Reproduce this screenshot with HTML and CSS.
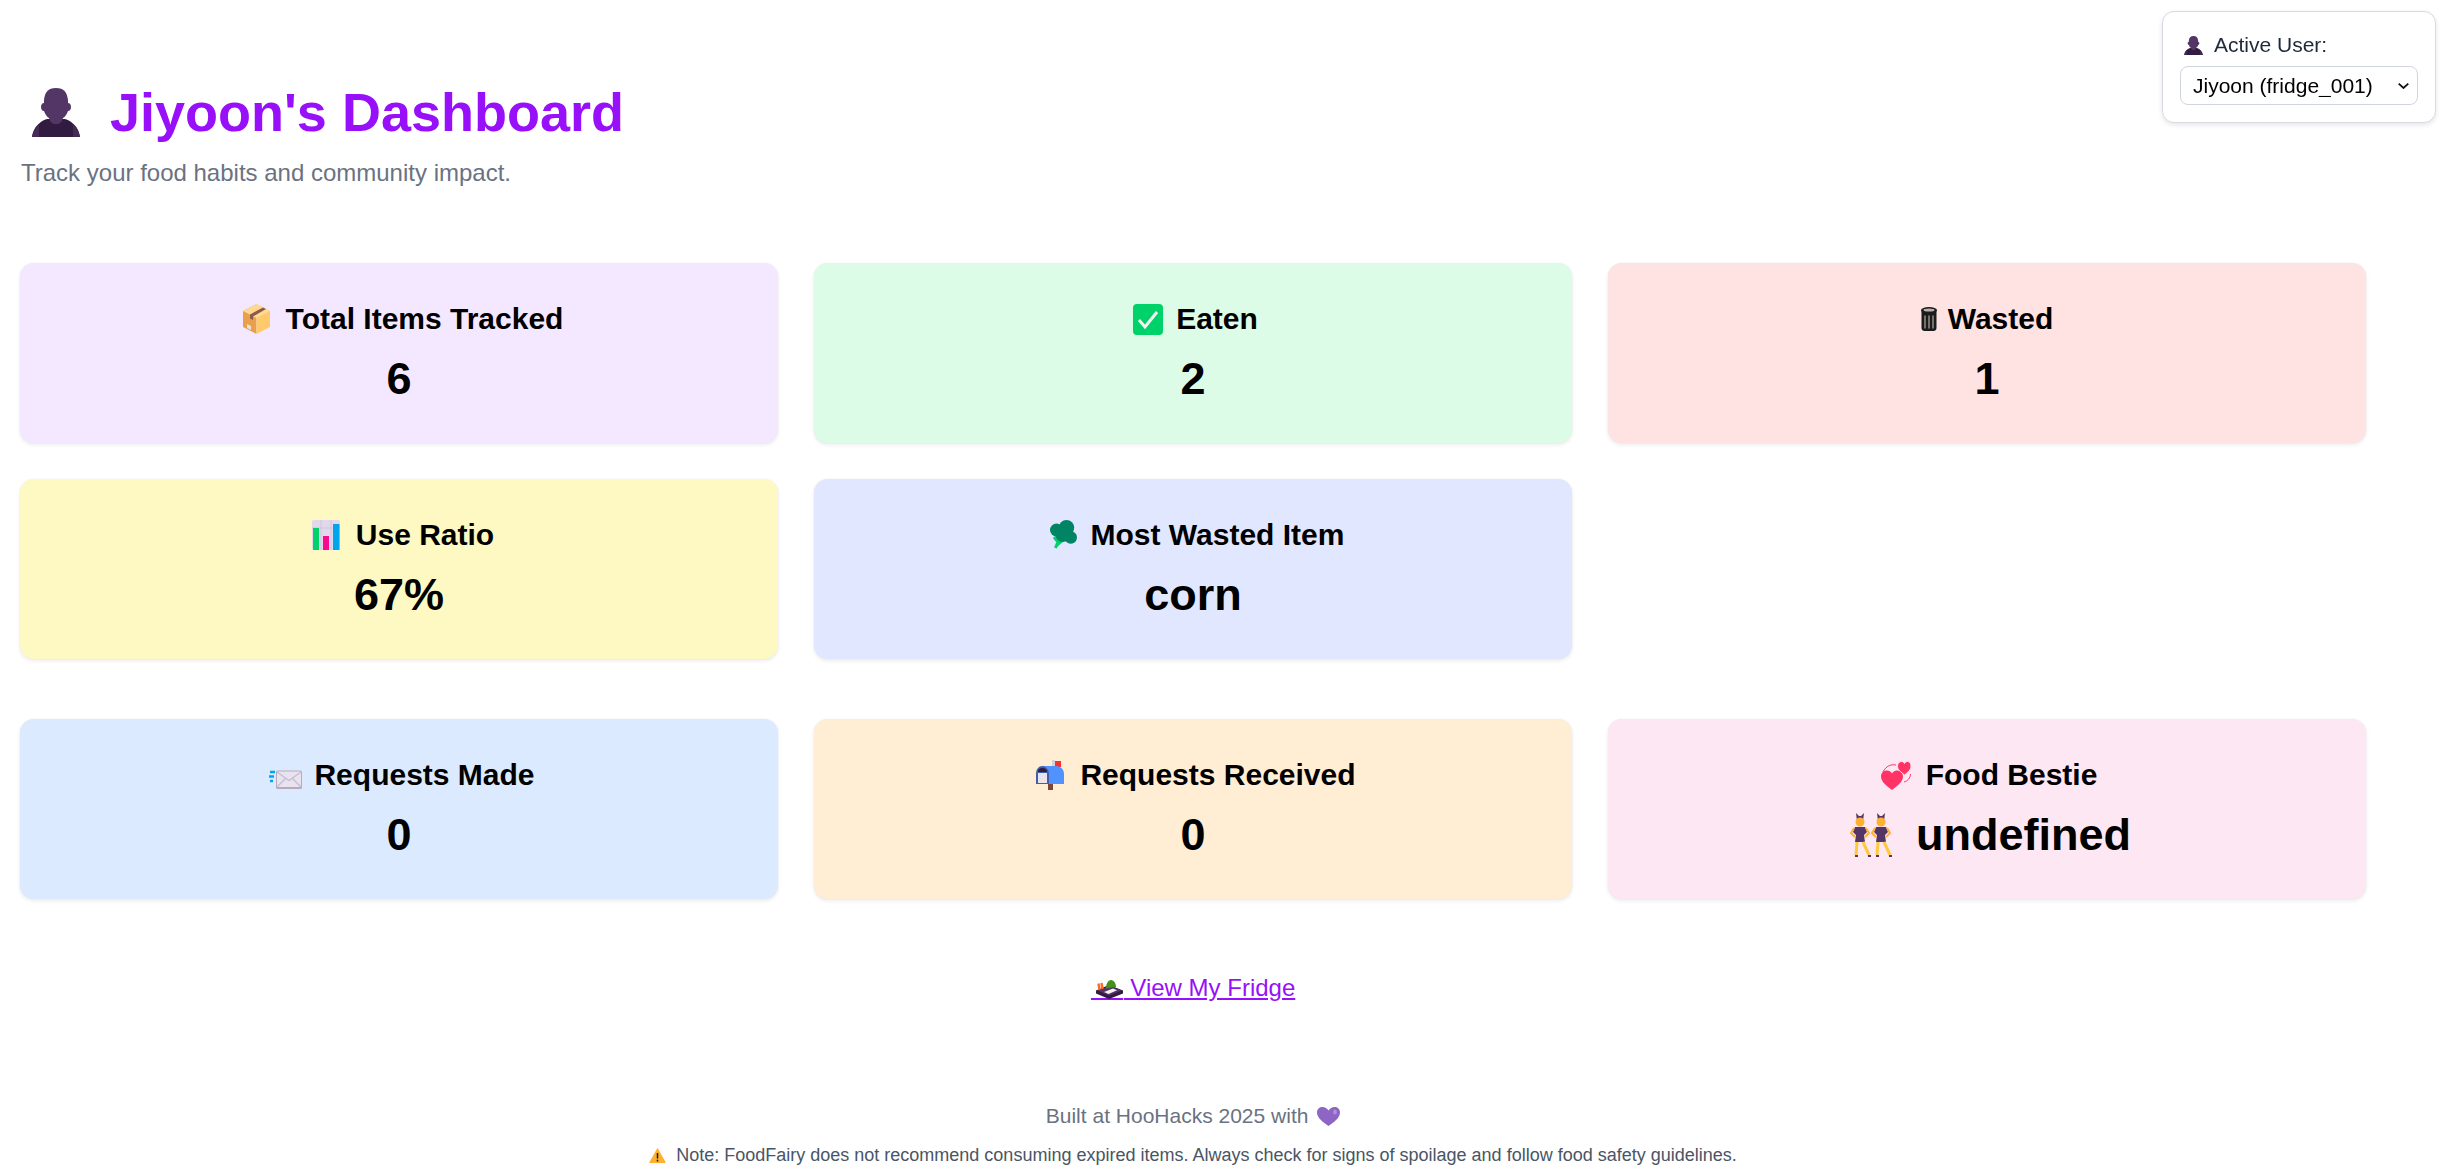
FILE: index.html
```html
<!DOCTYPE html>
<html lang="en">
<head>
<meta charset="utf-8">
<title>Jiyoon's Dashboard</title>
<link rel="stylesheet" href="styles.css">
</head>
<body>
<svg class="defs" width="0" height="0" aria-hidden="true">
  <symbol id="bust" viewBox="0 0 48 49">
    <path fill="#321b41" d="M0 49C1.500 40 7 33.500 15 31L33 31C41 33.500 46.500 40 48 49Z"/>
    <path fill="#442a55" d="M0 49C1 43 3 39 7 36L7 49ZM41 36C45 39 47 43 48 49L41 49Z"/>
    <path fill="#533566" d="M24 0C32 0 35 4 36 12L36 15C38 15 39 17 39 19C39 21 38 23 36 23C35 26 33 29 31 30C30 34 28 36 24 36C20 36 18 34 17 30C15 29 13 26 12 23C10 23 9 21 9 19C9 17 10 15 12 15L12 12C13 4 16 0 24 0Z"/>
  </symbol>
</svg>

<aside class="user-panel">
  <label class="user-label" for="user"><svg class="ico-user"><use href="#bust"/></svg>Active User:</label>
  <div class="select-wrap">
    <select class="user-select" id="user">
      <option>Jiyoon (fridge_001)</option>
    </select>
    <svg class="select-arrow" viewBox="0 0 11 6"><path d="M0.700 0.700L5.500 5L10.300 0.700" fill="none" stroke="#111" stroke-width="1.800"/></svg>
  </div>
</aside>

<main class="page">
  <header class="page-header">
    <h1 class="page-title"><svg class="ico-title"><use href="#bust"/></svg>Jiyoon's Dashboard</h1>
    <p class="page-sub">Track your food habits and community impact.</p>
  </header>

  <section class="grid">
    <article class="card c-purple">
      <h2 class="card-title">
        <svg class="ico ico-box" viewBox="0 0 27 30"><path fill="#e8a04c" d="M13.500 0L0 7V23L13.500 30Z"/><path fill="#ffca6b" d="M13.500 0L27 7V23L13.500 30Z"/><path fill="#ffd98f" d="M13.500 0L27 7L13.500 14L0 7Z"/><path fill="#8b5a4a" d="M7 10.500L20 3.500L23 5L10 12.500V16L7 14.500Z"/><path fill="#e9e3d6" d="M4 20L8 22V26L4 24Z"/></svg>
        Total Items Tracked
      </h2>
      <div class="card-value">6</div>
    </article>
    <article class="card c-green">
      <h2 class="card-title">
        <svg class="ico ico-check" viewBox="0 0 30 31"><rect width="30" height="31" rx="4" fill="#00d26a"/><path d="M6 16L12 23L24 8" fill="none" stroke="#f4f4f4" stroke-width="3"/></svg>
        Eaten
      </h2>
      <div class="card-value">2</div>
    </article>
    <article class="card c-red">
      <h2 class="card-title">
        <svg class="ico ico-trash" viewBox="0 0 18 24"><path fill="#1c1c1c" d="M1.500 4H16.500V21C16.500 23 15 24 13.500 24H4.500C3 24 1.500 23 1.500 21Z"/><ellipse cx="9" cy="3.200" rx="8" ry="3.200" fill="#1c1c1c"/><ellipse cx="9" cy="3" rx="5.500" ry="1.500" fill="#b8b0aa"/><path d="M5 8.500V21.500M9 8.500V21.500M13 8.500V21.500" stroke="#9b9590" stroke-width="1.400"/></svg>
        Wasted
      </h2>
      <div class="card-value">1</div>
    </article>
    <article class="card c-yellow">
      <h2 class="card-title">
        <svg class="ico ico-chart" viewBox="0 0 28 30"><rect width="28" height="30" rx="2" fill="#e1d8ec"/><path d="M0 8H28M9 0V30M19 0V30" stroke="#cfc6dc" stroke-width="1"/><rect x="1" y="8" width="6" height="22" fill="#00d26a"/><rect x="11" y="16" width="6" height="14" fill="#f70a8d"/><rect x="21" y="4" width="6.500" height="26" fill="#00a6ed"/></svg>
        Use Ratio
      </h2>
      <div class="card-value">67%</div>
    </article>
    <article class="card c-indigo">
      <h2 class="card-title">
        <svg class="ico ico-broc" viewBox="0 0 27 30"><path d="M9.500 18L5.500 28M8 22L4 17M7 25L14 19" fill="none" stroke="#00d26a" stroke-width="3"/><g fill="#008463"><circle cx="6.500" cy="10" r="6.500"/><circle cx="16.500" cy="7.700" r="7.700"/><circle cx="20.800" cy="17.500" r="6.200"/><circle cx="12.700" cy="14.500" r="7.500"/></g></svg>
        Most Wasted Item
      </h2>
      <div class="card-value">corn</div>
    </article>
  </section>

  <section class="grid grid-social">
    <article class="card c-blue">
      <h2 class="card-title">
        <svg class="ico ico-mail" viewBox="0 0 33 19"><path d="M1 2H6M0 6.500H5M1 11H4" stroke="#00a6ed" stroke-width="2.400"/><rect x="7" y="0.500" width="26" height="18.500" rx="1.500" fill="#b4acbc"/><rect x="8" y="1.500" width="24" height="15.500" rx="1" fill="#e8e3ee"/><path d="M8 2L20 10.500L32 2M8 17L17 8M32 17L23 8" fill="none" stroke="#c5bbcf" stroke-width="1.200"/></svg>
        Requests Made
      </h2>
      <div class="card-value">0</div>
    </article>
    <article class="card c-orange">
      <h2 class="card-title">
        <svg class="ico ico-box-mail" viewBox="0 0 28 30"><rect x="12" y="22" width="5" height="8" fill="#7d4533"/><rect x="16" y="0" width="3" height="14" fill="#d3d3d3"/><rect x="19" y="1" width="6" height="6" fill="#f8312f"/><path fill="#5092ff" d="M6 6H20C25 6 28 10 28 14V24H6Z"/><path fill="#3f5fa8" d="M0 14C0 9 3 6 6 6C9 6 13 9 13 14V24H0Z"/><path fill="#321b41" d="M2 12C2 9 4 8 6 8C9 8 11 9 11 12Z"/><path fill="#e8e3ee" d="M2 13H11V23H2Z"/></svg>
        Requests Received
      </h2>
      <div class="card-value">0</div>
    </article>
    <article class="card c-pink">
      <h2 class="card-title">
        <svg class="ico ico-hearts" viewBox="0 0 30 29"><path d="M2 11C5 5 10 3 15 4M29.500 13C29.500 17 26.500 20 23 21" fill="none" stroke="#ff3366" stroke-width="1"/><path fill="#ff3366" d="M11 29C6 25 0 21 0 15.500C0 11.500 3 9.500 6 9.500C8 9.500 10 10.500 11 12.500C12 10.500 14 9.500 16 9.500C19 9.500 22 11.500 22 15.500C22 21 16 25 11 29Z"/><path fill="#ff3366" stroke="#fce7f3" stroke-width="1" d="M23.500 14C20 11 16.500 9 16.500 5C16.500 2 18.500 0.500 20.500 0.500C22 0.500 23 1.500 23.500 2.500C24 1.500 25 0.500 26.500 0.500C28.500 0.500 30 2 30 5C30 9 27 11 23.500 14Z"/></svg>
        Food Bestie
      </h2>
      <div class="card-value card-value-row">
        <svg class="ico-bunny" viewBox="0 0 42 44"><g id="dancer"><path fill="#533566" d="M7 8L6 0L9 3L11 3L14 0L13 8Z"/><circle cx="10" cy="9" r="4.500" fill="#ffb02e"/><path fill="#533566" d="M5 14H15L17 19L14 22L15 29H5L6 22L3 19Z"/><path d="M4 15L1 20L5 24M16 15L19 20L15 24" fill="none" stroke="#ffb02e" stroke-width="2"/><path d="M7 29L6 42M13 29L19 42" fill="none" stroke="#ffc83d" stroke-width="3"/><path d="M5 43H8M18 43H21" stroke="#533566" stroke-width="2"/></g><use href="#dancer" x="21"/></svg>
        undefined
      </div>
    </article>
  </section>

  <nav class="link-row">
    <a class="fridge-link" href="#"><svg class="ico-sushi" viewBox="-5 0 32 21"><rect x="-5" y="18" width="32" height="2" fill="#9810fa"/><path fill="#321b41" d="M0 10.500L13 5L27 10.500V13.500L13 19L0 13.500Z"/><path fill="#533566" d="M1.500 10.500L13 6L25.500 10.500L13 15.500Z"/><path fill="#f4f4f4" d="M8 12L17 8.500L21 10.300L12.500 14Z"/><path d="M3.500 10L2.500 3.500M6.500 9L5.500 3" fill="none" stroke="#ff6723" stroke-width="2.400"/><path fill="#44911b" d="M10 8.500C10 3 12.500 0 15 0C17.500 0 20 3 20 7Z"/></svg> View My Fridge</a>
  </nav>

  <footer class="footer">
    <p class="footer-built">Built at HooHacks 2025 with <svg class="ico-heart" viewBox="0 0 23 19"><path fill="#8d65c5" d="M11.500 19C6 15 0 11 0 5.500C0 2 2.500 0 5.500 0C8 0 10 1.500 11.500 3.500C13 1.500 15 0 17.500 0C20.500 0 23 2 23 5.500C23 11 17 15 11.500 19Z"/><ellipse cx="18" cy="5" rx="1.800" ry="2.500" fill="#b38fe0"/></svg></p>
    <p class="footer-note"><svg class="ico-warn" viewBox="0 0 17 15"><path fill="#ffb02e" stroke="#ffb02e" stroke-width="1.200" stroke-linejoin="round" d="M8.500 1L16 14.400H1Z"/><path d="M8.500 5V10.500M8.500 11.800V13.500" stroke="#1c1c1c" stroke-width="1.500"/></svg>Note: FoodFairy does not recommend consuming expired items. Always check for signs of spoilage and follow food safety guidelines.</p>
  </footer>
</main>
</body>
</html>
```

FILE: styles.css
```css
* { box-sizing: border-box; }

html, body { margin: 0; padding: 0; background: #fff; }

body {
  font-family: "Liberation Sans", Arial, sans-serif;
  color: #000;
  height: 1170px;
  overflow: hidden;
}

.defs { position: absolute; }

.page { padding: 0 20px; width: 2386px; }

/* Active user panel */
.user-panel {
  position: fixed;
  top: 11px;
  right: 15px;
  width: 274px;
  height: 112px;
  padding: 21px 17px 0;
  background: #fff;
  border: 1px solid #d8d9e3;
  border-radius: 12px;
  box-shadow: 0 2px 5px rgba(0, 0, 0, 0.1);
}

.user-label {
  display: flex;
  align-items: center;
  font-size: 21px;
  line-height: 24px;
  color: #1e2939;
  padding-left: 4px;
}

.ico-user { width: 19px; height: 19px; margin-right: 11px; }

.select-wrap { position: relative; margin-top: 9px; }

.user-select {
  display: block;
  width: 238px;
  height: 39px;
  padding: 0 30px 0 12px;
  font-family: "Liberation Sans", Arial, sans-serif;
  font-size: 21px;
  color: #000;
  background: #fff;
  border: 1px solid #d1d5dc;
  border-radius: 8px;
  appearance: none;
  -webkit-appearance: none;
}

.select-arrow {
  position: absolute;
  top: 17px;
  right: 9px;
  width: 11px;
  height: 6px;
  pointer-events: none;
}

/* Header */
.page-header { padding-top: 79px; }

.page-title {
  display: flex;
  align-items: center;
  margin: 0;
  font-size: 54px;
  line-height: 66px;
  font-weight: 700;
  color: #9810fa;
}

.ico-title { width: 48px; height: 49px; margin: 0 30px 0 12px; }

.page-sub {
  margin: 14px 0 0 1px;
  font-size: 24px;
  line-height: 28px;
  color: #6a7282;
}

/* Cards */
.grid {
  display: grid;
  grid-template-columns: repeat(3, 1fr);
  gap: 36px;
  margin-top: 76px;
}

.grid-social { margin-top: 60px; }

.card {
  height: 180px;
  padding-top: 38px;
  border-radius: 14px;
  text-align: center;
  box-shadow: 0 2px 4px rgba(0, 0, 0, 0.08), 0 0 2px rgba(0, 0, 0, 0.06);
}

.c-purple { background: #f3e8ff; }
.c-green { background: #dcfce7; }
.c-red { background: #ffe2e2; }
.c-yellow { background: #fef9c2; }
.c-indigo { background: #e0e7ff; }
.c-blue { background: #dbeafe; }
.c-orange { background: #ffedd4; }
.c-pink { background: #fce7f3; }

.card-title {
  display: flex;
  justify-content: center;
  align-items: center;
  height: 36px;
  margin: 0;
  font-size: 30px;
  line-height: 36px;
  font-weight: 700;
}

.card-value {
  margin-top: 16px;
  font-size: 45px;
  line-height: 52px;
  font-weight: 700;
}

.card-value-row {
  display: flex;
  justify-content: center;
  align-items: center;
}

.ico { flex: none; display: block; }
.ico-box { width: 27px; height: 30px; margin: 0 16px 0 8px; }
.ico-check { width: 30px; height: 31px; margin: 0 13px 0 5px; }
.ico-trash { width: 18px; height: 24px; margin: 0 10px 0 -1px; }
.ico-chart { width: 28px; height: 30px; margin: 0 16px 0 8px; }
.ico-broc { width: 27px; height: 30px; margin: 0 14px 0 8px; }
.ico-mail { width: 33px; height: 19px; margin: 8px 12px 0 6px; }
.ico-box-mail { width: 28px; height: 30px; margin: 0 16px 0 6px; }
.ico-hearts { width: 30px; height: 29px; margin: 0 15px 0 4px; }
.ico-bunny { width: 42px; height: 44px; margin: 0 24px 0 7px; flex: none; }

/* Link */
.link-row { margin-top: 76px; text-align: center; }

.fridge-link {
  font-size: 24px;
  line-height: 26px;
  color: #9810fa;
  text-decoration: underline;
}

.ico-sushi { width: 32px; height: 21px; margin-right: 1px; vertical-align: -5px; }

/* Footer */
.footer { margin-top: 103px; text-align: center; }

.footer-built {
  margin: 0;
  font-size: 21px;
  line-height: 24px;
  color: #6a7282;
}

.ico-heart { width: 23px; height: 19px; margin-left: 3px; vertical-align: -3px; }

.footer-note {
  margin: 17px 0 0;
  font-size: 18px;
  line-height: 20px;
  color: #4a5565;
}

.ico-warn { width: 17px; height: 15px; margin-right: 10px; vertical-align: -2px; }
```
